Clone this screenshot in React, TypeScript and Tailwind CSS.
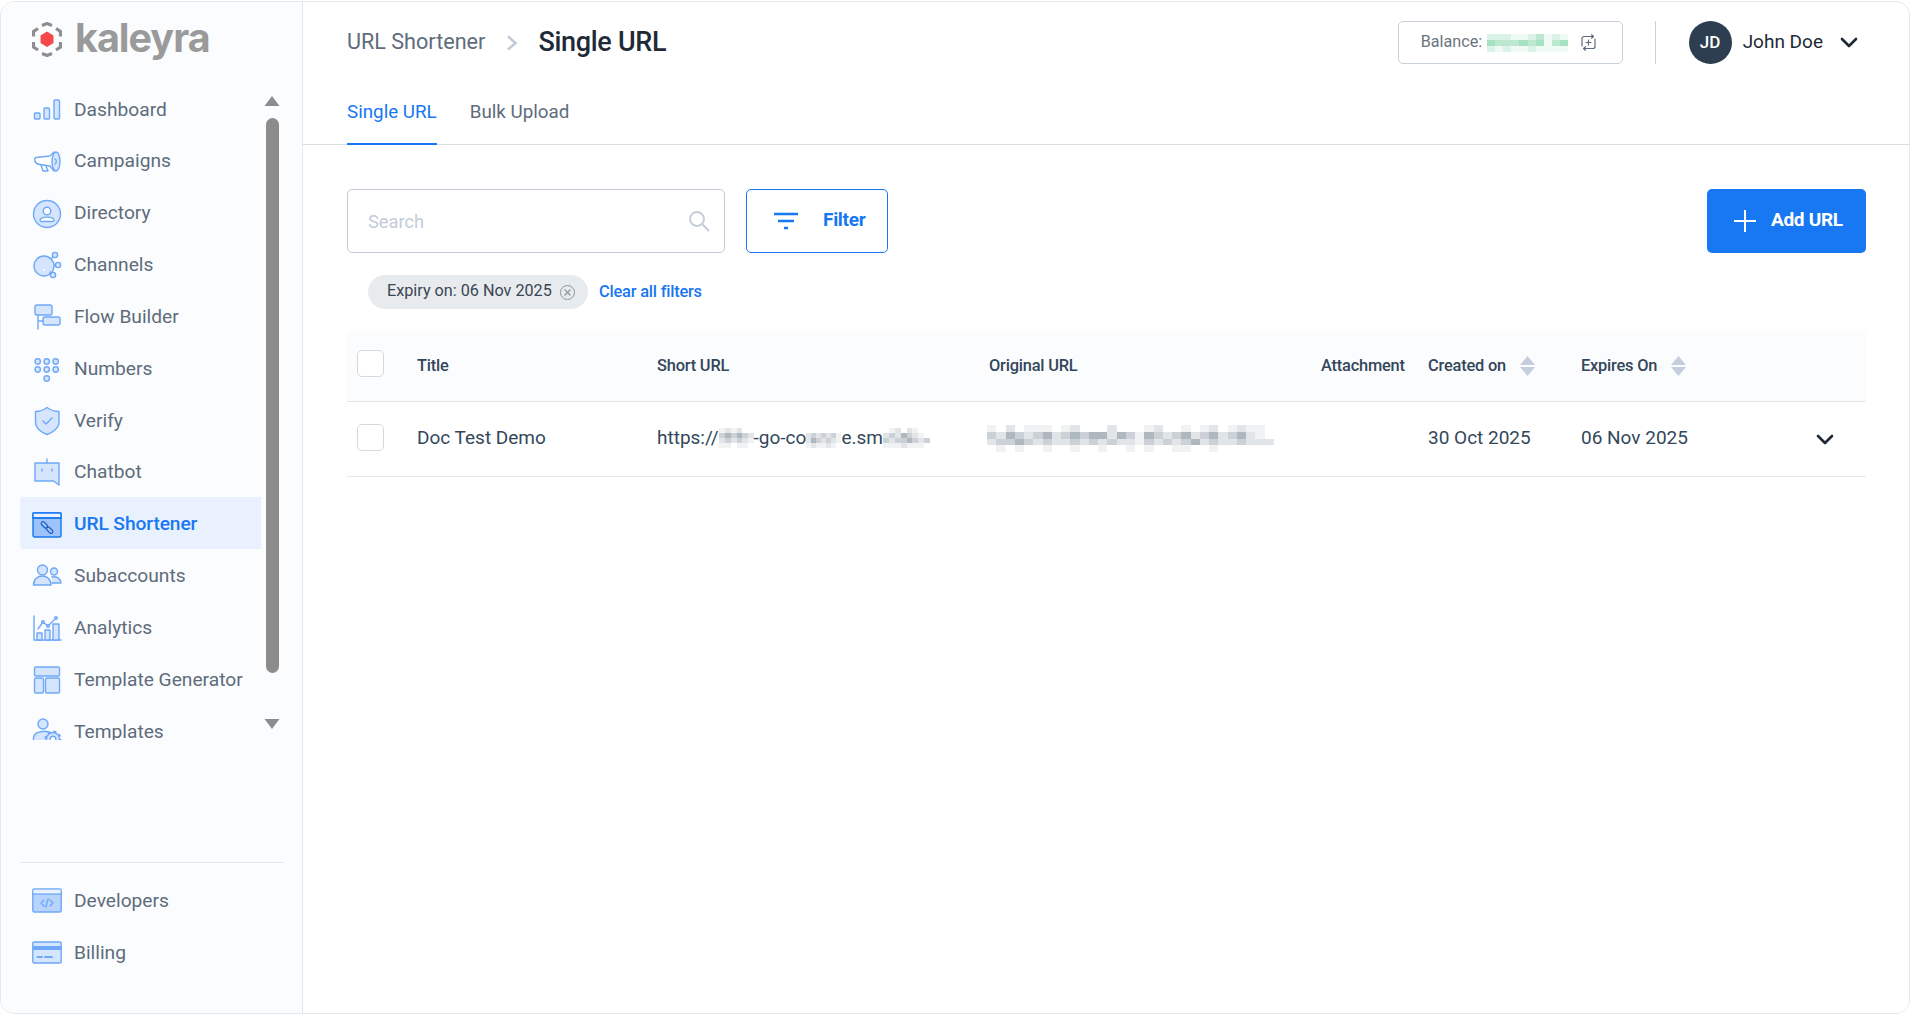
import React from "react";

const S = "#6FA8F7";
const F = "#D5E5FD";

function Ic({ children, w = 30, h = 30 }: { children: React.ReactNode; w?: number; h?: number }) {
  return (
    <svg width={w} height={h} viewBox="0 0 30 30" fill="none" stroke={S} strokeWidth="1.4" strokeLinejoin="round" strokeLinecap="round">
      {children}
    </svg>
  );
}

const icons: Record<string, React.ReactNode> = {
  Dashboard: (
    <Ic>
      <rect x="2.5" y="18" width="5.5" height="6" rx="1" fill={F} />
      <rect x="12" y="13" width="5.5" height="11" rx="1" fill={F} />
      <rect x="22" y="5" width="5.5" height="19" rx="1" fill={F} />
    </Ic>
  ),
  Campaigns: (
    <Ic>
      <path d="M4 10.5 L18 9 L22 5 V24 L18 19 L8 17.5 C3 17 1 12 4 10.5Z" fill="#fff" />
      <ellipse cx="24" cy="14.5" rx="4" ry="9.5" fill={F} />
      <path d="M9 18 L11 24 H16 L14 19" />
      <path d="M23 12 a3 3 0 0 1 0 5" />
    </Ic>
  ),
  Directory: (
    <Ic>
      <circle cx="15" cy="15" r="13.5" fill={F} />
      <circle cx="15" cy="12" r="3.8" fill="#fff" />
      <path d="M8 21.5 C8 17 22 17 22 21.5 C22 22.5 21 22.5 20 22.5 H10 C9 22.5 8 22.5 8 21.5Z" fill="#fff" />
    </Ic>
  ),
  Channels: (
    <Ic>
      <circle cx="12" cy="16" r="10" fill={F} />
      <circle cx="23" cy="5" r="2.6" fill={F} />
      <circle cx="26" cy="15" r="2.6" fill={F} />
      <circle cx="21" cy="25" r="2.6" fill={F} />
      <path d="M19 9 L21 7 M22.5 15 H23.5 M18 22 L19 23.5" />
      <circle cx="12" cy="20" r="1" fill="#fff" stroke="none" />
    </Ic>
  ),
  "Flow Builder": (
    <Ic>
      <rect x="3" y="3" width="17" height="10" rx="2" fill={F} />
      <rect x="11" y="15" width="17" height="8" rx="2" fill={F} />
      <path d="M6 13 V27 M6 19 H11" />
    </Ic>
  ),
  Numbers: (
    <Ic>
      {[5.7, 14.7, 23.7].flatMap((x) => [7.5, 15.5].map((y) => <circle key={x + "-" + y} cx={x} cy={y} r="2.7" fill={F} />))}
      <circle cx="14.7" cy="24.5" r="2.7" fill={F} />
    </Ic>
  ),
  Verify: (
    <Ic>
      <path d="M15 1.5 C19 4.5 23 5.5 27 5.5 V16 C27 22 21 26.5 15 28.5 C9 26.5 3.5 22 3.5 16 V5.5 C7 5.5 11 4.5 15 1.5Z" fill={F} />
      <path d="M11 15 L14 18 L20 12" />
    </Ic>
  ),
  Chatbot: (
    <Ic>
      <path d="M3 5 H27 V27 L21.5 23 H3Z" fill={F} />
      <path d="M15 1 V5" />
      <path d="M10 11 V13 M20 11 V13" />
    </Ic>
  ),
  "URL Shortener": (
    <svg width="30" height="30" viewBox="0 0 30 30" fill="none" stroke="#1877F2" strokeWidth="1.4" strokeLinecap="round" strokeLinejoin="round">
      <rect x="1" y="3" width="28" height="24" rx="1.5" fill="#9CC4FA" />
      <rect x="1" y="3" width="28" height="5" fill="#EAF2FD" />
      <path d="M1 8 H29" />
      <g transform="rotate(45 15 17.5)" stroke="#1D5FBF" strokeWidth="1.2">
        <rect x="7.5" y="15.7" width="7.5" height="3.6" rx="1.8" />
        <rect x="15" y="15.7" width="7.5" height="3.6" rx="1.8" />
      </g>
    </svg>
  ),
  Subaccounts: (
    <Ic>
      <circle cx="10.5" cy="8" r="5" fill={F} />
      <circle cx="22" cy="9.5" r="3.5" fill={F} />
      <path d="M1.5 23 C1.5 11 19 11 19 23Z" fill={F} />
      <path d="M20 15 C25 14 29 17 29 21 H20" fill={F} />
    </Ic>
  ),
  Analytics: (
    <Ic>
      <path d="M2 3 V27 H29" />
      <rect x="5" y="20" width="5" height="7" fill={F} />
      <rect x="13" y="17" width="5" height="10" fill={F} />
      <rect x="21" y="11" width="6" height="16" fill={F} />
      <path d="M6 16 L11 9 L16 13 L24 5" />
      <circle cx="11" cy="9" r="1.3" fill={F} />
      <circle cx="16" cy="13" r="1.3" fill={F} />
      <circle cx="24" cy="5" r="1.3" fill={F} />
    </Ic>
  ),
  "Template Generator": (
    <Ic>
      <rect x="2.5" y="2" width="25" height="9" rx="1.5" fill={F} />
      <rect x="2.5" y="13" width="9" height="15" rx="1.5" fill={F} />
      <rect x="13.5" y="13" width="14" height="15" rx="1.5" fill={F} />
    </Ic>
  ),
  Templates: (
    <Ic>
      <circle cx="11" cy="7" r="5" fill={F} />
      <path d="M1.5 26 V21 C1.5 14 15 13 18 16 L14 26Z" fill={F} />
      <circle cx="21" cy="22" r="6.5" fill={F} />
      <circle cx="21" cy="22" r="7.6" strokeWidth="1.8" strokeDasharray="3 3" strokeLinecap="butt" />
      <circle cx="21" cy="22" r="2.8" fill="#fff" />
    </Ic>
  ),
  Developers: (
    <Ic>
      <rect x="0.8" y="3" width="28.4" height="23" rx="1.5" fill="#B8D4FC" />
      <path d="M0.8 8 H29.2" />
      <rect x="1.5" y="3.7" width="27" height="3.6" fill="#EAF2FD" stroke="none" />
      <path d="M12 14 L9 17 L12 20 M18 14 L21 17 L18 20 M16.2 13 L13.8 21" />
    </Ic>
  ),
  Billing: (
    <Ic>
      <rect x="0.8" y="4" width="28.4" height="21" rx="1.5" fill="#D5E5FD" />
      <rect x="0.8" y="8" width="28.4" height="4" fill={S} stroke="none" />
      <path d="M5.5 19 H10 M13 19 H20" strokeWidth="2" />
    </Ic>
  ),
};

const top = ["Dashboard", "Campaigns", "Directory", "Channels", "Flow Builder", "Numbers", "Verify", "Chatbot", "URL Shortener", "Subaccounts", "Analytics", "Template Generator", "Templates"];

function NavRow({ label }: { label: string }) {
  const active = label === "URL Shortener";
  return (
    <div className={active ? "flex h-[51.85px] shrink-0 items-center gap-[12px] rounded-l-[4px] bg-[#E8F1FD] pl-[12px] pt-[4px] text-[19.2px] font-medium tracking-[-0.1px] text-[#1877F2]" : "flex h-[51.85px] shrink-0 items-center gap-[12px] pl-[12px] pt-[4px] text-[19.2px] text-[#5E6C7B]"}>
      <span className="flex h-[30px] w-[30px] shrink-0 items-center justify-center">{icons[label]}</span>
      <span className="whitespace-nowrap">{label}</span>
    </div>
  );
}

function Logo() {
  return (
    <svg width="30" height="35" viewBox="0 0 30 35" fill="none">
      <path d="M10 3.5 L15 1.5 L20 3.5 M24 6.5 L28.5 9.5 V14.5 M6 6.5 L1.5 9.5 V14.5 M28.5 20 V25 L24 28 M1.5 20 V25 L6 28 M10 31.5 L15 33.5 L20 31.5" stroke="#8E8E8E" strokeWidth="3.2" />
      <path d="M15 9.5 L21.5 13.5 V21 L15 25 L8.5 21 V13.5Z" fill="#F5484A" />
    </svg>
  );
}

function Blur({ rows, w, h, className }: { rows: string[][]; w: number; h: number; className?: string }) {
  const cols = rows[0].length;
  return (
    <svg width={w} height={h} viewBox={`0 0 ${cols} ${rows.length}`} preserveAspectRatio="none" className={className} shapeRendering="crispEdges">
      {rows.flatMap((r, y) => r.map((c, x) => <rect key={x + "-" + y} x={x} y={y} width={1} height={1} fill={c} />))}
    </svg>
  );
}

const g1 = "#CBD1D6", g2 = "#E2E5E8", g3 = "#AFB8BF", g4 = "#F1F2F4", g0 = "#FFFFFF";
const b1 = [
  [g4, g2, g4, g2, g0, g0],
  [g1, g3, g1, g3, g1, g2],
  [g2, g1, g2, g1, g2, g4],
  [g4, g4, g0, g4, g4, g0],
];
const b2 = [
  [g0, g0, g0, g0, g0, g0, g0],
  [g2, g1, g2, g1, g2, g1, g4],
  [g2, g3, g1, g2, g1, g2, g4],
  [g4, g2, g4, g4, g2, g4, g0],
];
const b3 = [
  [g0, g4, g2, g0, g2, g4, g0, g0],
  [g2, g1, g2, g3, g1, g2, g4, g0],
  [g1, g2, g1, g1, g3, g1, g2, g1],
  [g4, g4, g4, g2, g4, g4, g4, g0],
];
const o = [
  [g4, g0, g2, g0, g4, g4, g4, g0, g4, g2, g0, g0, g0, g2, g0, g0, g0, g4, g2, g0, g0, g4, g0, g4, g2, g0, g4, g2, g4, g4, g0],
  [g1, g2, g3, g1, g2, g1, g3, g2, g1, g3, g1, g3, g3, g2, g3, g1, g4, g3, g1, g2, g1, g3, g2, g1, g3, g2, g1, g3, g2, g4, g0],
  [g2, g1, g1, g3, g1, g2, g1, g2, g2, g1, g2, g1, g2, g1, g2, g2, g4, g1, g2, g1, g2, g1, g3, g2, g1, g2, g2, g1, g2, g2, g2],
  [g0, g4, g0, g4, g0, g0, g4, g0, g0, g4, g0, g0, g4, g0, g0, g4, g0, g4, g0, g0, g4, g4, g0, g0, g4, g0, g0, g0, g0, g0, g0],
];
const a = "#DBF2E7", c = "#BCE8D1", d = "#A6E2C2", e = "#EFFAF5";
const bal = [
  [a, a, a, e, e, a, c, e, a, e],
  [d, c, c, c, d, c, d, e, c, d],
  [a, e, a, e, e, a, e, e, e, e],
];

function Sort() {
  return (
    <span className="flex flex-col gap-[2px]">
      <svg width="15" height="9" viewBox="0 0 15 9"><path d="M7.5 0 L15 9 H0Z" fill="#C4CEDC" /></svg>
      <svg width="15" height="9" viewBox="0 0 15 9"><path d="M7.5 9 L15 0 H0Z" fill="#C4CEDC" /></svg>
    </span>
  );
}

function Chev({ className }: { className?: string }) {
  return (
    <svg width="18" height="11" viewBox="0 0 18 11" fill="none" stroke="#1F2A37" strokeWidth="2.7" strokeLinecap="round" strokeLinejoin="round" className={className}>
      <path d="M2 2 L9 9 L16 2" />
    </svg>
  );
}

const Check = () => <span className="block h-[27px] w-[27px] rounded-[5px] border border-[#D5D9DE] bg-white" />;

export default function App() {
  return (
    <div className="h-[1015px] w-[1911px] overflow-hidden bg-white pb-[1px] pr-[1px] pt-[1px] font-[Roboto,sans-serif]">
      <div className="flex h-full w-full overflow-hidden rounded-[14px] border border-[#E6E8EB] bg-white">
        {/* Sidebar */}
        <aside className="flex w-[302px] shrink-0 flex-col border-r border-[#E3E6EB] bg-[#FBFCFE]">
          <div className="flex h-[80px] items-start gap-[13px] pl-[31px] pt-[20px]">
            <Logo />
            <span className="-mt-[3px] font-[Inter,sans-serif] text-[39.5px] font-bold leading-[38px] tracking-[-1px] text-[#9A9A9A]">kaleyra</span>
          </div>
          <div className="flex h-[658px] overflow-hidden pl-[19px]">
            <div className="flex w-[241px] flex-col">
              {top.map((l) => <NavRow key={l} label={l} />)}
            </div>
            <div className="ml-[3px] flex w-[16px] flex-col items-center pt-[13px]">
              <svg width="16" height="12" viewBox="0 0 16 12"><path d="M8 1 L15.5 11 H0.5Z" fill="#8C8C8C" /></svg>
              <div className="mt-[11px] h-[555px] w-[13px] rounded-full bg-[#8C8C8C]" />
              <svg className="mt-[45px]" width="16" height="12" viewBox="0 0 16 12"><path d="M8 11 L15.5 1 H0.5Z" fill="#8C8C8C" /></svg>
            </div>
          </div>
          <div className="flex-1" />
          <div className="mx-[19px] h-[1px] w-[264px] bg-[#E5E8EC]" />
          <div className="mb-[36px] mt-[10px] flex flex-col pl-[19px]">
            <NavRow label="Developers" />
            <NavRow label="Billing" />
          </div>
        </aside>

        {/* Main */}
        <main className="flex min-w-0 flex-1 flex-col">
          <header className="h-[143px] shrink-0 border-b border-[#D9DEE5] px-[44px]">
            <div className="flex h-[83px] items-start justify-between pt-[19px]">
              <div className="flex h-[43px] items-center">
                <span className="text-[21.6px] text-[#5E6C7B]">URL Shortener</span>
                <svg className="ml-[21px] mr-[20px]" width="12" height="16" viewBox="0 0 12 16" fill="none" stroke="#BFC9D6" strokeWidth="2.4"><path d="M2 1.5 L9.5 8 L2 14.5" /></svg>
                <span className="text-[27px] font-medium tracking-[-0.3px] text-[#1F2A37]">Single URL</span>
              </div>
              <div className="flex items-center">
                <div className="flex h-[43px] w-[225px] items-center rounded-[5px] border border-[#C8D0DA] pl-[22px]">
                  <span className="text-[16.2px] text-[#6B7580]">Balance:</span>
                  <Blur rows={bal} w={81} h={18} className="ml-[5px]" />
                  <svg className="ml-[13px]" width="15" height="17" viewBox="0 0 15 17" fill="none" stroke="#5E6C7B" strokeWidth="1.2" strokeLinecap="round" strokeLinejoin="round">
                    <path d="M12 2.5 H3 a2 2 0 0 0 -2 2 V12 M3 14.5 H12 a2 2 0 0 0 2 -2 V5" />
                    <path d="M7.5 6 V11 M5 8.5 H10" />
                    <path d="M10.5 0.8 L12.5 2.5 L10.5 4.2 M4.5 12.8 L2.5 14.5 L4.5 16.2" />
                  </svg>
                </div>
                <div className="ml-[32px] h-[43px] w-[1px] bg-[#CBD2DB]" />
                <div className="ml-[33px] flex h-[43px] w-[43px] items-center justify-center rounded-full bg-[#2C3E50] text-[17px] font-medium text-white">JD</div>
                <span className="ml-[11px] text-[19px] text-[#1F2A37]">John Doe</span>
                <Chev className="ml-[17px] mr-[7px]" />
              </div>
            </div>
            <div className="flex h-[60px] items-start gap-[33px]">
              <div className="flex h-[60px] flex-col justify-between pt-[15px]">
                <span className="text-[18.8px] leading-[24px] text-[#1877F2]">Single URL</span>
                <span className="block h-[2px] bg-[#1877F2]" />
              </div>
              <span className="pt-[15px] text-[18.8px] leading-[24px] text-[#5E6C7B]">Bulk Upload</span>
            </div>
          </header>

          <section className="flex-1 pl-[44px] pr-[43px] pt-[44px]">
            <div className="flex h-[64px] items-stretch">
              <div className="flex w-[378px] items-center justify-between rounded-[5px] border border-[#C3CCD8] pl-[20px] pr-[14px]">
                <span className="mt-[1px] text-[18.3px] text-[#C3CCD8]">Search</span>
                <svg width="22" height="22" viewBox="0 0 22 22" fill="none" stroke="#C3CCD8" strokeWidth="1.9" strokeLinecap="round"><circle cx="9" cy="9" r="7" /><path d="M14 14 L20.5 20.5" /></svg>
              </div>
              <div className="ml-[21px] flex w-[142px] items-center rounded-[5px] border border-[#1877F2] pl-[26px]">
                <svg width="26" height="20" viewBox="0 0 26 20" stroke="#1877F2" strokeWidth="2.4"><path d="M1 3 H25 M5 10 H21 M11 17 H15" /></svg>
                <span className="mb-[2px] ml-[24px] text-[19px] font-bold tracking-[-0.3px] text-[#1877F2]">Filter</span>
              </div>
              <div className="flex-1" />
              <div className="flex w-[159px] items-center rounded-[5px] bg-[#1877F2] pl-[27px] text-white">
                <svg width="22" height="22" viewBox="0 0 22 22" stroke="#fff" strokeWidth="2" fill="none"><path d="M11 0 V22 M0 11 H22" /></svg>
                <span className="mb-[2px] ml-[15px] text-[19px] font-bold tracking-[-0.3px]">Add URL</span>
              </div>
            </div>

            <div className="mt-[22px] flex h-[34px] items-center pl-[21px]">
              <div className="flex h-[34px] w-[220px] items-center rounded-full bg-[#E8EBEE] pl-[19px]">
                <span className="mb-[1px] whitespace-nowrap text-[16.2px] text-[#3A4654]">Expiry on: 06 Nov 2025</span>
                <span className="ml-[8px] flex h-[15px] w-[15px] items-center justify-center rounded-full border border-[#8A95A1]">
                  <svg width="7" height="7" viewBox="0 0 7 7" stroke="#8A95A1" strokeWidth="1.2"><path d="M0.5 0.5 L6.5 6.5 M6.5 0.5 L0.5 6.5" /></svg>
                </span>
              </div>
              <span className="ml-[11px] text-[16.4px] font-medium tracking-[-0.2px] text-[#1877F2]">Clear all filters</span>
            </div>

            <div className="mt-[22px] flex h-[71px] items-center border-b border-[#E4E8ED] bg-[#FBFCFE] text-[16.4px] font-medium tracking-[-0.2px] text-[#33475B]">
              <div className="-mt-[5px] w-[70px] pl-[10px]"><Check /></div>
              <div className="w-[240px]">Title</div>
              <div className="w-[332px]">Short URL</div>
              <div className="w-[332px]">Original URL</div>
              <div className="w-[107px] whitespace-nowrap">Attachment</div>
              <div className="flex w-[153px] items-center gap-[14px]">Created on <Sort /></div>
              <div className="flex items-center gap-[14px]">Expires On <Sort /></div>
            </div>
            <div className="flex h-[75px] items-center border-b border-[#E4E8ED] pb-[2px] text-[19px] text-[#33475B]">
              <div className="-mt-[1px] w-[70px] pl-[10px]"><Check /></div>
              <div className="w-[240px]">Doc Test Demo</div>
              <div className="flex w-[332px] items-center whitespace-nowrap">
                <span>https://</span>
                <Blur rows={b1} w={35} h={20} />
                <span>-go-co</span>
                <Blur rows={b2} w={35} h={20} />
                <span>e.sm</span>
                <Blur rows={b3} w={47} h={20} />
              </div>
              <div className="w-[332px]"><Blur rows={o} w={287} h={27} className="-ml-[2px]" /></div>
              <div className="w-[107px]" />
              <div className="w-[153px]">30 Oct 2025</div>
              <div className="flex flex-1 items-center">
                <span>06 Nov 2025</span>
                <Chev className="ml-[128px] mt-[2px]" />
              </div>
            </div>
          </section>
        </main>
      </div>
    </div>
  );
}
